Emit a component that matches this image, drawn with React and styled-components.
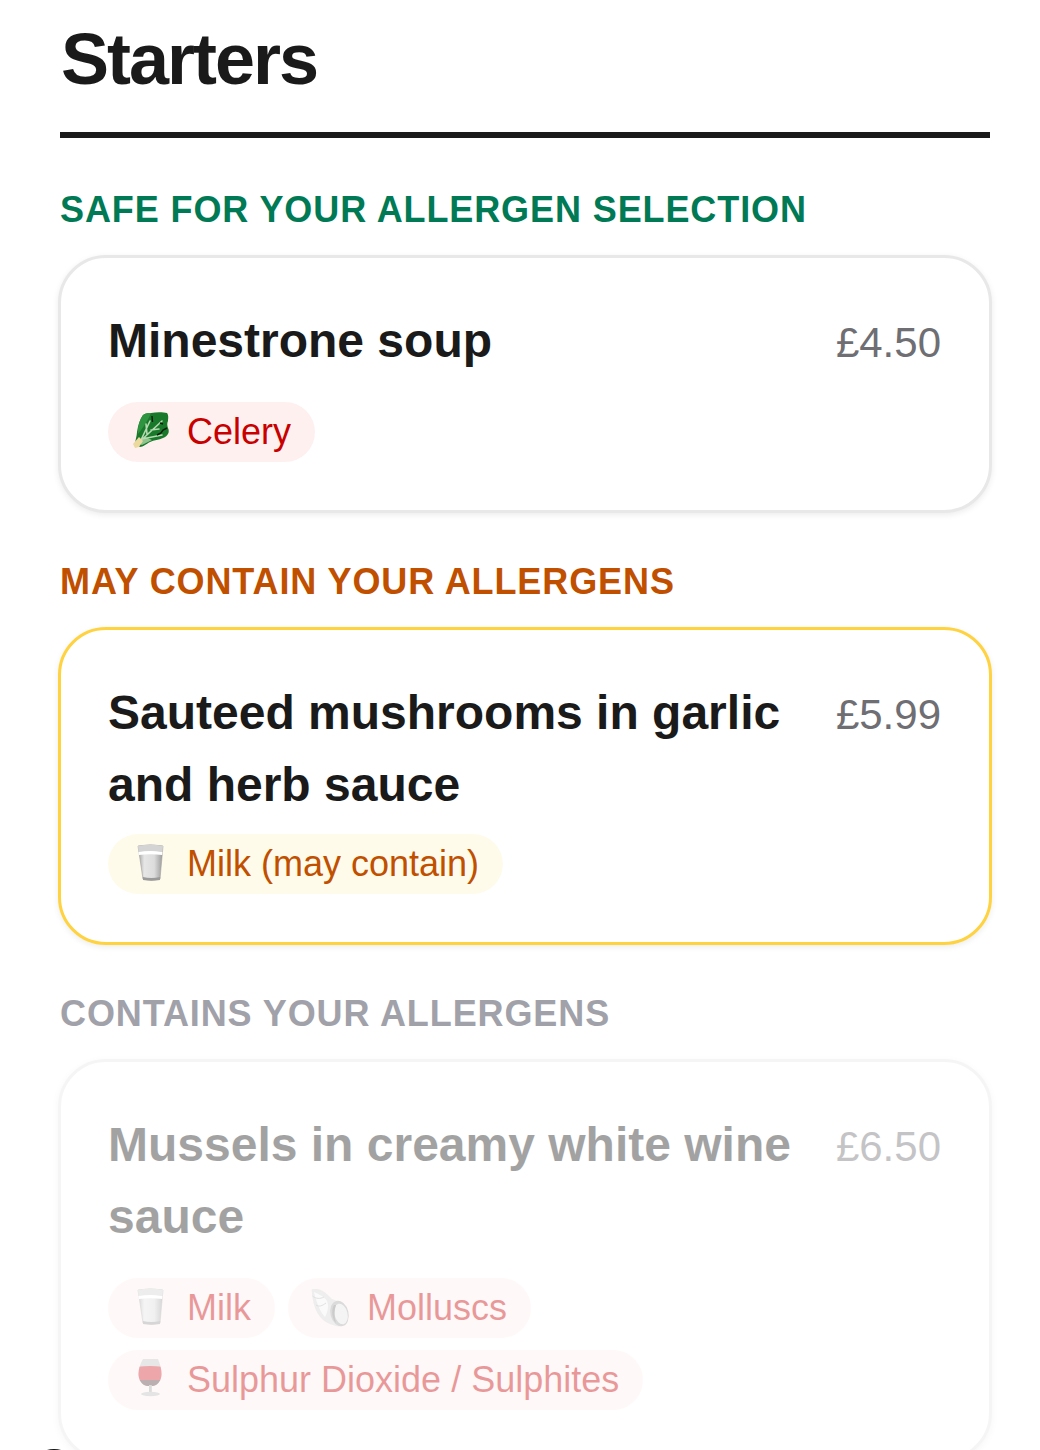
import styled, { createGlobalStyle } from "styled-components";

const GlobalStyle = createGlobalStyle`
  html, body {
    margin: 0;
    height: 1450px;
    overflow: hidden;
    background: #fff;
    font-family: "Liberation Sans", Arial, sans-serif;
  }
`;

const LeafIcon = () => (
  <svg width="36" height="40" viewBox="0 0 36 40" style={{ overflow: "visible" }}>
    <path d="M3 33C3 28 5 24 5 20C6 13 8 7 11 3C14 1 17 1 19 1C24 0 31 0 35 1C37 4 36 7 36 9C35 11 35 13 36 16C38 20 36 24 31 26C27 28 22 28 18 30C14 32 11 35 8 35Z" fill="#19792a" />
    <path d="M11 3C14 1 17 1 19 1C17 6 13 13 6 22C5 15 8 8 11 3Z" fill="#2f9440" />
    <path d="M5 31L13 25L20 28L10 33Z" fill="#8fc48c" />
    <path d="M4 33L30 9M9 28L18 9M10 27L30 23M15 22L14 12M19 18L27 17" stroke="#b5d9b0" strokeWidth="1.6" fill="none" strokeLinecap="round" />
    <path d="M1 32L7 25L11 29L7 35L3 36Z" fill="#ecd9a0" />
    <path d="M20 4L20.5 10M25 23L29 21L31 18L35 16M28 11L31 12" stroke="#0c1d0d" strokeWidth="1.4" fill="none" />
  </svg>
);

const MilkIcon = () => (
  <svg width="36" height="40" viewBox="0 0 36 40">
    <defs>
      <linearGradient id="milkBody" x1="0" x2="1" y1="0" y2="0">
        <stop offset="0" stopColor="#a2a2a2" />
        <stop offset="0.25" stopColor="#e6e6e6" />
        <stop offset="0.65" stopColor="#dcdcdc" />
        <stop offset="1" stopColor="#989898" />
      </linearGradient>
    </defs>
    <path d="M6 2Q18.5 -0.5 31 2L28 35Q19.5 37.5 11 35Z" fill="url(#milkBody)" stroke="#a0a0a0" strokeWidth="0.6" />
    <path d="M6 2Q18.5 -0.5 31 2L30.5 8Q18.5 6 6.5 8Z" fill="#d4d4d4" />
    <path d="M6.5 8Q18.5 6 30.5 8L30.2 11Q18.5 9.5 6.8 11Z" fill="#fff" />
    <path d="M10.8 33Q19.5 35 28.2 33L28 36Q19.5 37.5 11 36Z" fill="#9a9a9a" />
  </svg>
);

const ShellIcon = () => (
  <svg width="36" height="40" viewBox="0 0 36 40" style={{ overflow: "visible" }}>
    <path d="M-0.3 1.3C3 0.8 7 1 10 2.5C14 4.5 17 8 20 11C24 12 30 15 33 20C37 26 37 33 33 36C30 39 25 39 21 37C14 35 9 31 6 26C2 20 0 10 -0.3 1.3Z" fill="#d6d6d6" />
    <path d="M2 4C6 6 12 8 15 13C17 17 16 24 13 29C8 24 4 13 2 4Z" fill="#f4f4f4" />
    <path d="M0.5 8C4 11 8 11 12 9M4 17C7 19 10 18 14 15" stroke="#b4b4b4" strokeWidth="1" fill="none" />
    <ellipse cx="27.5" cy="25.5" rx="9" ry="13" transform="rotate(-14 27.5 25.5)" fill="#a6a6a6" />
    <ellipse cx="29" cy="26" rx="6.5" ry="10.5" transform="rotate(-14 29 26)" fill="#e6e6e6" />
    <path d="M22 17C19 22 20 31 24 35C22 29 22 23 24 17Z" fill="#7f7f7f" />
  </svg>
);

const WineIcon = () => (
  <svg width="36" height="40" viewBox="0 0 36 40" style={{ overflow: "visible" }}>
    <defs>
      <clipPath id="wineBowl">
        <path d="M11 -1H26C28 4 29.5 9 29.5 14C29.5 20 26 25.5 21 26H15C10 25.5 6.5 20 6.5 14C6.5 9 8 4 11 -1Z" />
      </clipPath>
    </defs>
    <g clipPath="url(#wineBowl)">
      <rect x="5" y="-2" width="26" height="30" fill="#c5c5c5" />
      <path d="M5 7Q18 5 31 7V21H5Z" fill="#d4242b" />
      <rect x="5" y="20" width="26" height="8" fill="#5a3a40" />
    </g>
    <rect x="17" y="25" width="2.8" height="7.5" fill="#a8a8a8" />
    <ellipse cx="18.5" cy="34" rx="9.5" ry="2.2" fill="#bcbcbc" />
  </svg>
);

const ICONS = { leaf: LeafIcon, milk: MilkIcon, shell: ShellIcon, wine: WineIcon };

const sections = [
  {
    title: "SAFE FOR YOUR ALLERGEN SELECTION",
    tone: "safe",
    name: "Minestrone soup",
    price: "£4.50",
    chips: [{ icon: "leaf", label: "Celery" }],
  },
  {
    title: "MAY CONTAIN YOUR ALLERGENS",
    tone: "may",
    name: "Sauteed mushrooms in garlic and herb sauce",
    price: "£5.99",
    chips: [{ icon: "milk", label: "Milk (may contain)" }],
  },
  {
    title: "CONTAINS YOUR ALLERGENS",
    tone: "contains",
    name: "Mussels in creamy white wine sauce",
    price: "£6.50",
    chips: [
      { icon: "milk", label: "Milk" },
      { icon: "shell", label: "Molluscs" },
      { icon: "wine", label: "Sulphur Dioxide / Sulphites" },
    ],
  },
];

const App = () => {
  return (
    <Page>
      <GlobalStyle />
      <Title>Starters</Title>
      {sections.map((section) => (
        <section key={section.title}>
          <SectionLabel $tone={section.tone}>{section.title}</SectionLabel>
          <Card $tone={section.tone}>
            <CardHead>
              <ItemName>{section.name}</ItemName>
              <Price>{section.price}</Price>
            </CardHead>
            <Chips $tone={section.tone}>
              {section.chips.map((chip) => {
                const Icon = ICONS[chip.icon];
                return (
                  <Chip key={chip.label} $tone={section.tone}>
                    <Icon />
                    {chip.label}
                  </Chip>
                );
              })}
            </Chips>
          </Card>
        </section>
      ))}
      <CornerBlob />
    </Page>
  );
};

const LABEL_COLORS = { safe: "#007a55", may: "#c05000", contains: "#a1a1aa" };
const BORDER_COLORS = { safe: "#e8e8e8", may: "#ffd23f", contains: "#e8e8e8" };

const Page = styled.div`
  position: relative;
  height: 1450px;
  overflow: hidden;
  padding: 0 50px 0 60px;
  box-sizing: border-box;
`;

const Title = styled.h1`
  margin: 0;
  padding: 17px 0 2px;
  font-size: 72px;
  line-height: 84px;
  font-weight: 700;
  letter-spacing: -2px;
  text-indent: 1px;
  color: #1a1a1a;
  &::after {
    content: "";
    display: block;
    height: 6px;
    margin-top: 31px;
    background: #1a1a1a;
  }
`;

const SectionLabel = styled.h2`
  margin: 48px 0 23px;
  font-size: 36px;
  line-height: 44px;
  font-weight: 700;
  letter-spacing: 0.9px;
  color: ${(p) => LABEL_COLORS[p.$tone]};
`;

const Card = styled.div`
  margin: 0 -2px -1px;
  padding: 47px 47px 48px;
  border: 3px solid ${(p) => BORDER_COLORS[p.$tone]};
  border-radius: 48px;
  background: #fff;
  box-shadow: 0 2px 6px rgba(0, 0, 0, 0.08);
  opacity: ${(p) => (p.$tone === "contains" ? 0.4 : 1)};
`;

const CardHead = styled.div`
  display: flex;
  justify-content: space-between;
  align-items: flex-start;
  gap: 32px;
`;

const ItemName = styled.div`
  flex: 1;
  font-size: 48px;
  line-height: 72px;
  font-weight: 700;
  color: #1a1a1a;
`;

const Price = styled.div`
  font-size: 42px;
  line-height: 76px;
  margin: 0 1px -4px 0;
  color: #6e6e73;
`;

const Chips = styled.div`
  display: flex;
  flex-wrap: wrap;
  gap: 12px 13px;
  margin-top: ${(p) => (p.$tone === "may" ? "13px" : "25px")};
`;

const Chip = styled.span`
  display: inline-flex;
  align-items: center;
  gap: 19px;
  height: 60px;
  padding: 0 24px;
  border-radius: 30px;
  font-size: 36px;
  background: ${(p) => (p.$tone === "may" ? "#fffbeb" : "#fff0f0")};
  color: ${(p) => (p.$tone === "may" ? "#c05000" : "#c80000")};
`;

const CornerBlob = styled.div`
  position: absolute;
  left: 44px;
  top: 1449px;
  width: 20px;
  height: 6px;
  border-radius: 50%;
  background: #111;
`;

export default App;
